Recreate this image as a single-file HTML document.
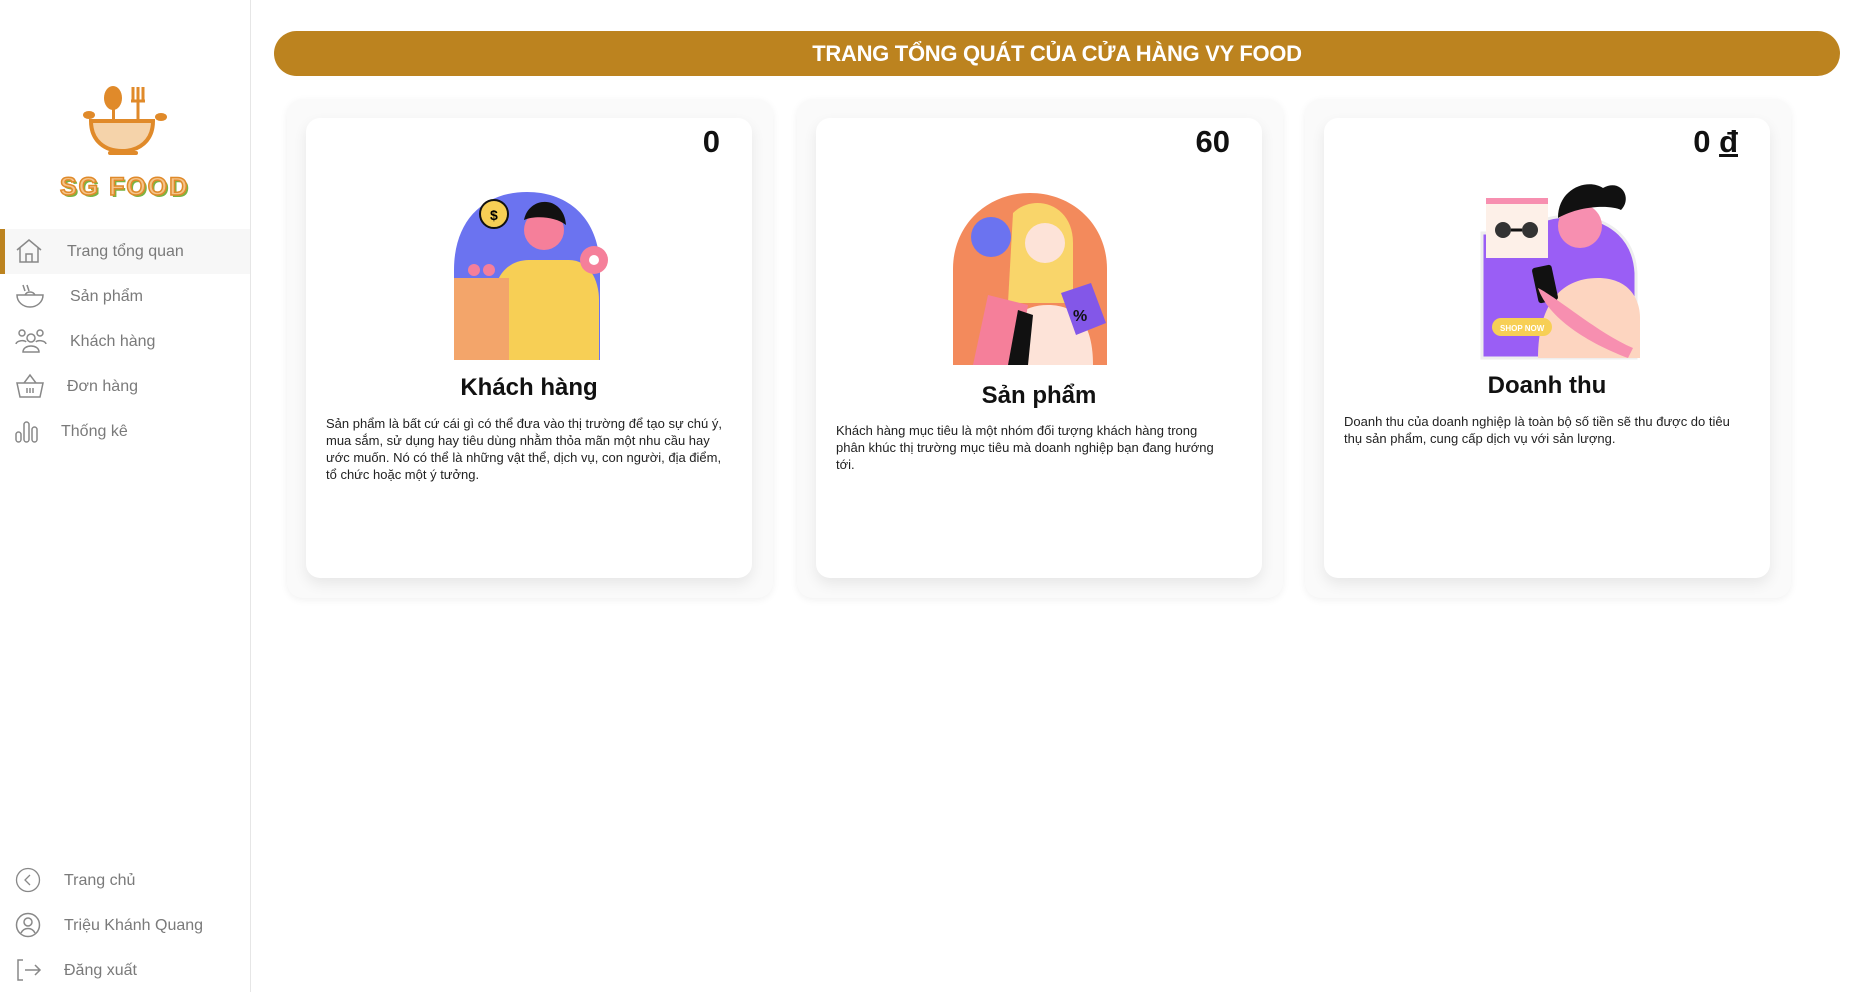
<!DOCTYPE html>
<html><head><meta charset="utf-8"><style>
*{margin:0;padding:0;box-sizing:border-box}
body{width:1867px;height:992px;background:#fff;font-family:"Liberation Sans",sans-serif;position:relative;overflow:hidden}
.side{position:absolute;left:0;top:0;width:251px;height:992px;border-right:1px solid #e6e6e6}
.nav{position:absolute;left:0;width:250px;height:45px;display:flex;align-items:center;color:#7a7a7a;font-size:16px}
.nav svg{position:absolute;left:15px;top:9px}
.nav span{position:absolute}
.active{background:#f7f7f7;border-left:5px solid #bc831f}
.bar{position:absolute;left:274px;top:31px;width:1566px;height:45px;border-radius:23px;background:#bc831f;color:#fff;font-weight:bold;font-size:22px;text-align:center;line-height:45px;letter-spacing:-0.3px}
.outer{position:absolute;top:99px;width:486px;height:499px;border-radius:16px;background:#fafafa;box-shadow:0 2px 8px rgba(0,0,0,.06)}
.inner{position:absolute;left:19px;top:19px;width:446px;height:460px;border-radius:14px;background:#fff;box-shadow:0 6px 14px rgba(0,0,0,.08)}
.num{position:absolute;right:32px;top:6px;font-size:31px;font-weight:bold;color:#111}
.title{position:absolute;left:0;width:100%;text-align:center;font-size:24px;font-weight:bold;color:#111}
.desc{position:absolute;left:20px;width:398px;font-size:13px;line-height:17px;color:#222}
.ill{position:absolute}
</style></head><body>
<div class="side">
 <svg style="position:absolute;left:83px;top:85px" width="86" height="72" viewBox="0 0 86 72">
  <ellipse cx="30" cy="13" rx="9" ry="12" fill="#e08a2a"/><rect x="29" y="20" width="3" height="30" fill="#e08a2a"/>
  <path d="M50 2v14M55 2v14M60 2v14M48 16h14M55 16v30" stroke="#e08a2a" stroke-width="3" fill="none"/>
  <path d="M8 36h62c0 20-14 30-31 30S8 56 8 36z" fill="#f5d3aa" stroke="#e08a2a" stroke-width="4"/>
  <ellipse cx="6" cy="30" rx="6" ry="4" fill="#e08a2a"/><ellipse cx="78" cy="32" rx="6" ry="4" fill="#e08a2a"/>
  <rect x="25" y="66" width="30" height="4" rx="2" fill="#e08a2a"/>
 </svg>
 <div style="position:absolute;left:60px;top:173px;font-size:25px;font-weight:900;color:#f5c48a;letter-spacing:2px;-webkit-text-stroke:1.5px #e08a2a;text-shadow:2px 2px 0 #7bb342">SG FOOD</div>
 <div class="nav active" style="top:229px"><svg width="28" height="26" viewBox="0 0 28 26" fill="none" stroke="#888" stroke-width="1.5" style="left:10px"><path d="M2 12L14 2l12 10M5 10v14h18V10M11 24v-8h6v8"/></svg><span style="left:62px">Trang tổng quan</span></div>
 <div class="nav" style="top:274px"><svg width="30" height="26" viewBox="0 0 30 26" fill="none" stroke="#888" stroke-width="1.5"><path d="M2 12h26c0 7-6 12-13 12S2 19 2 12zM8 2l2 6M12 2l2 6M10 12c2-4 8-4 10 0"/></svg><span style="left:70px">Sản phẩm</span></div>
 <div class="nav" style="top:319px"><svg width="32" height="26" viewBox="0 0 32 26" fill="none" stroke="#888" stroke-width="1.5"><circle cx="7" cy="5" r="3"/><circle cx="25" cy="5" r="3"/><circle cx="16" cy="10" r="4"/><path d="M1 16c1-4 9-4 10-2M31 16c-1-4-9-4-10-2M8 24c0-8 16-8 16 0z"/></svg><span style="left:70px">Khách hàng</span></div>
 <div class="nav" style="top:364px"><svg width="30" height="26" viewBox="0 0 30 26" fill="none" stroke="#888" stroke-width="1.5"><path d="M2 10h26l-3 14H5zM9 10l6-8 6 8M12 15v5M15 15v5M18 15v5"/></svg><span style="left:67px">Đơn hàng</span></div>
 <div class="nav" style="top:409px"><svg width="24" height="26" viewBox="0 0 24 26" fill="none" stroke="#888" stroke-width="1.5"><rect x="1" y="14" width="5" height="10" rx="2.5"/><rect x="9" y="4" width="5" height="20" rx="2.5"/><rect x="17" y="9" width="5" height="15" rx="2.5"/></svg><span style="left:61px">Thống kê</span></div>
 <div class="nav" style="top:858px"><svg width="26" height="26" viewBox="0 0 26 26" fill="none" stroke="#888" stroke-width="1.3"><circle cx="13" cy="13" r="11.5"/><path d="M15 8l-5 5 5 5"/></svg><span style="left:64px">Trang chủ</span></div>
 <div class="nav" style="top:903px"><svg width="26" height="26" viewBox="0 0 26 26" fill="none" stroke="#888" stroke-width="1.5"><circle cx="13" cy="13" r="11.5"/><circle cx="13" cy="10" r="4"/><path d="M6 21c3-6 11-6 14 0"/></svg><span style="left:64px">Triệu Khánh Quang</span></div>
 <div class="nav" style="top:948px"><svg width="28" height="26" viewBox="0 0 28 26" fill="none" stroke="#888" stroke-width="1.5"><path d="M8 3H3v20h5M10 13h15M20 8l5 5-5 5"/></svg><span style="left:64px">Đăng xuất</span></div>
</div>
<div class="bar">TRANG TỔNG QUÁT CỦA CỬA HÀNG VY FOOD</div>

<div class="outer" style="left:287px"><div class="inner">
 <div class="num">0</div>
 <svg class="ill" style="left:148px;top:72px" width="160" height="170" viewBox="0 0 160 170">
  <path d="M0 170V80C0 30 30 2 73 2s73 28 73 78v90z" fill="#6b73f0"/>
  <path d="M40 170V110c0-25 15-40 35-40h40c20 0 30 20 30 40v60z" fill="#f7cf55"/>
  <rect x="0" y="88" width="55" height="82" fill="#f3a56a"/>
  <circle cx="90" cy="40" r="20" fill="#f57f9a"/><path d="M70 30c5-25 40-25 42 5-10-8-30-10-42-5z" fill="#111"/>
  <circle cx="40" cy="24" r="14" fill="#f7cf55" stroke="#111" stroke-width="2"/><text x="36" y="30" font-size="14" font-weight="bold" font-family="Liberation Sans">$</text>
  <circle cx="140" cy="70" r="14" fill="#f57f9a"/><circle cx="140" cy="70" r="5" fill="#fff"/>
  <circle cx="20" cy="80" r="6" fill="#f57f9a"/><circle cx="35" cy="80" r="6" fill="#f57f9a"/>
 </svg>
 <div class="title" style="top:256px">Khách hàng</div>
 <div class="desc" style="top:297px">Sản phẩm là bất cứ cái gì có thể đưa vào thị trường để tạo sự chú ý, mua sắm, sử dụng hay tiêu dùng nhằm thỏa mãn một nhu cầu hay ước muốn. Nó có thể là những vật thể, dịch vụ, con người, địa điểm, tổ chức hoặc một ý tưởng.</div>
</div></div>

<div class="outer" style="left:797px"><div class="inner">
 <div class="num">60</div>
 <svg class="ill" style="left:137px;top:75px" width="155" height="172" viewBox="0 0 155 172">
  <path d="M0 172V76C0 32 34 0 77 0s77 32 77 76v96z" fill="#f38a5c"/>
  <path d="M60 20c20-20 60-10 60 30v60H55z" fill="#f9d56a"/>
  <circle cx="92" cy="50" r="20" fill="#fde3d8"/>
  <path d="M45 172c0-40 20-60 50-60s45 20 45 60z" fill="#fde3d8"/>
  <circle cx="38" cy="44" r="20" fill="#6b73f0"/>
  <path d="M20 172l15-70 40 10-10 60z" fill="#f57f9a"/><path d="M55 172l10-55 15 5-5 50z" fill="#111"/>
  <path d="M108 100l30-10 15 40-30 12z" fill="#8357e8"/>
  <text x="120" y="128" font-size="16" font-weight="bold" fill="#111" font-family="Liberation Sans">%</text>
 </svg>
 <div class="title" style="top:264px">Sản phẩm</div>
 <div class="desc" style="top:304px;width:385px">Khách hàng mục tiêu là một nhóm đối tượng khách hàng trong phân khúc thị trường mục tiêu mà doanh nghiệp bạn đang hướng tới.</div>
</div></div>

<div class="outer" style="left:1305px"><div class="inner">
 <div class="num">0 <u>đ</u></div>
 <svg class="ill" style="left:154px;top:60px" width="162" height="182" viewBox="0 0 162 182">
  <path d="M4 180V55h40c20-25 110-30 114 40v85z" fill="#9a5ef5" stroke="#eee" stroke-width="3"/>
  <rect x="8" y="20" width="62" height="60" fill="#fdf0e8"/><rect x="8" y="20" width="62" height="6" fill="#f78fb0"/>
  <circle cx="25" cy="52" r="8" fill="#333"/><circle cx="52" cy="52" r="8" fill="#333"/><path d="M33 52h11" stroke="#111" stroke-width="3"/>
  <circle cx="102" cy="48" r="22" fill="#f78fb0"/><path d="M80 40c0-30 30-40 45-30 18-10 30 10 18 22-10-5-40-5-63 8z" fill="#111"/>
  <path d="M60 180c0-50 20-80 60-80 30 0 42 20 42 40v40z" fill="#fdd5c0"/>
  <rect x="57" y="88" width="20" height="36" rx="3" fill="#111" transform="rotate(-12 67 106)"/>
  <path d="M60 110c20 10 60 45 95 60l-5 10c-40-15-80-40-90-70z" fill="#f78fb0"/>
  <rect x="14" y="140" width="60" height="18" rx="9" fill="#f7cf55"/>
  <text x="22" y="153" font-size="8" fill="#fff" font-weight="bold" font-family="Liberation Sans">SHOP NOW</text>
 </svg>
 <div class="title" style="top:254px">Doanh thu</div>
 <div class="desc" style="top:295px">Doanh thu của doanh nghiệp là toàn bộ số tiền sẽ thu được do tiêu thụ sản phẩm, cung cấp dịch vụ với sản lượng.</div>
</div></div>
</body></html>
